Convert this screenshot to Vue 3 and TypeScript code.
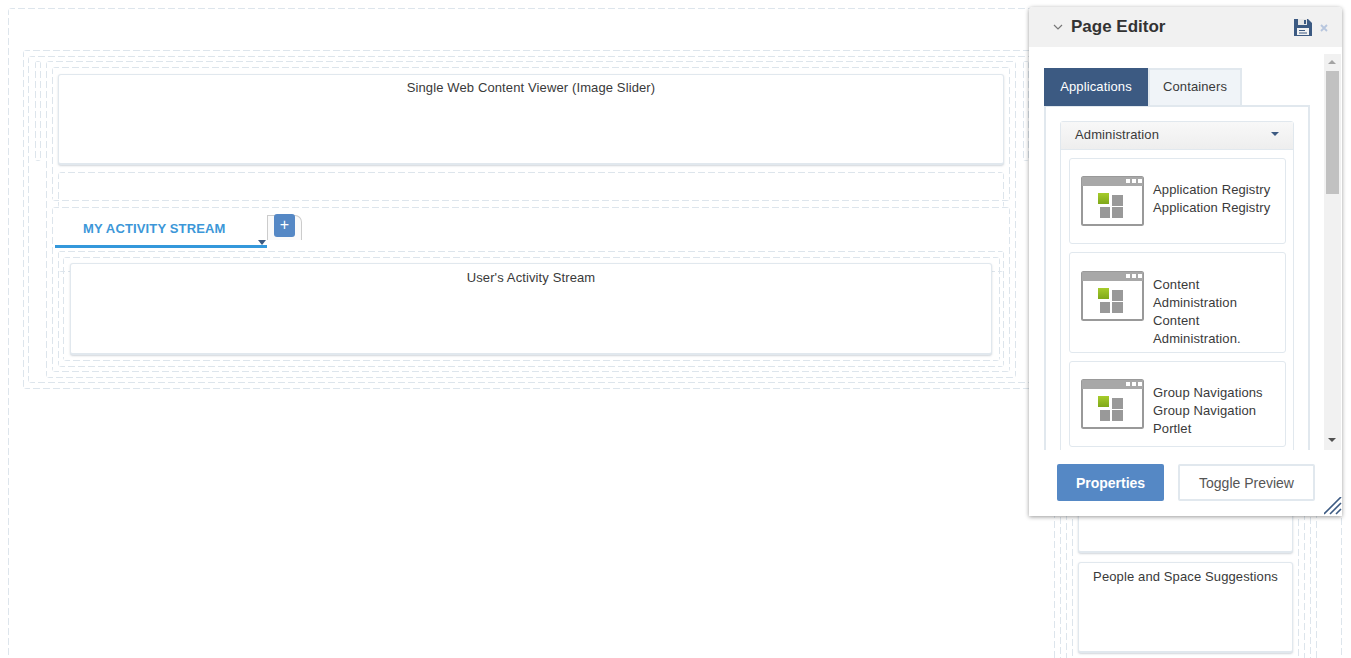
<script setup lang="ts">
interface App { id: string; lines: string }
const apps: App[] = [
  { id: 'a', lines: 'Application Registry Application Registry' },
  { id: 'b', lines: 'Content Administration Content Administration.' },
  { id: 'c', lines: 'Group Navigations Group Navigation Portlet' },
]
</script>

<template>
  <div class="page">
    <div class="outer dash">
      <div class="box-a dash">
        <div class="box-b dash">
          <div class="thin dash"></div>
          <div class="box-c dash">
            <div class="box-d dash">
              <div class="card card-wide">Single Web Content Viewer (Image Slider)</div>
              <div class="box-e dash"></div>
            </div>
            <div class="box-f dash">
              <div class="tabrow">
                <div class="stream-tab">MY ACTIVITY STREAM<span class="tab-caret"></span></div>
                <div class="add-tab"><span class="add-btn">+</span></div>
              </div>
              <div class="box-g dash">
                <div class="strip dash"></div>
                <div class="box-h dash">
                  <div class="card card-stream">User's Activity Stream</div>
                </div>
              </div>
            </div>
          </div>
          <div class="thin thin-2 dash"></div>
          <div class="r1 dash">
            <div class="r2 dash">
              <div class="r3 dash">
                <div class="r4 dash">
                  <div class="card card-side"></div>
                  <div class="card card-side">People and Space Suggestions</div>
                </div>
              </div>
            </div>
          </div>
        </div>
      </div>
    </div>

    <aside class="panel">
      <header class="panel-head">
        <svg class="chev" width="10" height="6" viewBox="0 0 10 6"><path d="M1 1l4 4 4-4" fill="none" stroke="#777" stroke-width="1.2" /></svg>
        <h1 class="panel-title">Page Editor</h1>
        <svg class="save" width="18" height="18" viewBox="0 0 18 18">
          <path d="M0 1h14l4 4v13H0z" fill="#3c5a82" />
          <rect x="4" y="1" width="9" height="6" fill="#e6e6e6" />
          <rect x="10" y="2" width="2" height="4" fill="#3c5a82" />
          <rect x="3" y="10" width="12" height="7" fill="#f2f2f2" />
          <rect x="5" y="12" width="6" height="1" fill="#3c5a82" />
          <rect x="5" y="14.5" width="8" height="1" fill="#3c5a82" />
        </svg>
        <svg class="close" width="8" height="8" viewBox="0 0 8 8"><path d="M1 1l6 6M7 1l-6 6" stroke="#b7c6de" stroke-width="1.8" /></svg>
      </header>

      <div class="panel-body">
        <div class="panel-scroll">
          <div class="tabs">
            <div class="tab tab-on">Applications</div>
            <div class="tab tab-off">Containers</div>
          </div>
          <div class="tab-content">
            <div class="accordion">
              <div class="acc-head">Administration<span class="acc-caret"></span></div>
              <div class="acc-body">
                <div v-for="app in apps" :key="app.id" class="app">
                  <svg class="app-icon" width="63" height="50" viewBox="0 0 63 50">
                    <defs>
                      <linearGradient :id="'g' + app.id" x1="0" y1="0" x2="0" y2="1">
                        <stop offset="0" stop-color="#a6cc2b" />
                        <stop offset="1" stop-color="#7fa81a" />
                      </linearGradient>
                    </defs>
                    <rect x="1" y="1" width="61" height="48" rx="1.5" fill="#fff" stroke="#999" stroke-width="2" />
                    <rect x="1" y="1" width="61" height="9" fill="#a8a8a8" />
                    <rect x="45" y="3" width="4" height="4" fill="#fff" />
                    <rect x="51" y="3" width="4" height="4" fill="#fff" />
                    <rect x="57" y="3" width="4" height="4" fill="#fff" />
                    <rect x="17" y="17" width="11" height="11" :fill="'url(#g' + app.id + ')'" />
                    <rect x="31" y="19" width="11" height="11" fill="#999" />
                    <rect x="19" y="31" width="10" height="11" fill="#999" />
                    <rect x="31" y="31" width="11" height="11" fill="#999" />
                  </svg>
                  <div class="app-text">{{ app.lines }}</div>
                </div>
              </div>
            </div>
          </div>
        </div>
        <div class="scrollbar">
          <span class="arrow arrow-up"></span>
          <span class="thumb"></span>
          <span class="arrow arrow-down"></span>
        </div>
      </div>

      <footer class="panel-foot">
        <button class="btn btn-primary" type="button">Properties</button>
        <button class="btn btn-ghost" type="button">Toggle Preview</button>
        <svg class="grip" width="18" height="18" viewBox="0 0 18 18">
          <path d="M0 17L17 0M6 17L17 6M12 17l5-5" stroke="#3c5a82" stroke-width="1.6" fill="none" />
        </svg>
      </footer>
    </aside>
  </div>
</template>

<style>
html, body { margin: 0; overflow: hidden; background: #fff; }
</style>

<style scoped>
* { box-sizing: border-box; }
.page {
  position: relative;
  height: 658px;
  overflow: hidden;
  padding: 8px 9px 0 8px;
  font-family: "Liberation Sans", Arial, sans-serif;
  font-size: 13px;
  letter-spacing: .12px;
  color: #3a3a3a;
  background: #fff;
}
.dash {
  border: 1px solid transparent;
  border-radius: 4px;
  background:
    repeating-linear-gradient(90deg, #dde5ec 0 7px, transparent 7px 10px) 0 0 / 100% 1px no-repeat border-box,
    repeating-linear-gradient(90deg, #dde5ec 0 7px, transparent 7px 10px) 0 100% / 100% 1px no-repeat border-box,
    repeating-linear-gradient(180deg, #dde5ec 0 7px, transparent 7px 10px) 0 0 / 1px 100% no-repeat border-box,
    repeating-linear-gradient(180deg, #dde5ec 0 7px, transparent 7px 10px) 100% 0 / 1px 100% no-repeat border-box;
}
.outer { height: 800px; padding: 41px 14px 0; }
.box-a { height: 339px; padding: 5px 4px 0; }
.box-b { height: 327px; padding: 4px 0 0 6px; display: flex; align-items: flex-start; }
.thin { width: 6px; height: 100px; flex: none; }
.box-c { width: 970px; height: 317px; margin-left: 5px; padding: 5px 0 0 5px; flex: none; }
.box-d { width: 958px; height: 134px; padding: 6px 0 0 5px; }
.card {
  background: #fff;
  border: 1px solid #e1e8ee;
  border-bottom-width: 2px;
  border-radius: 3px;
  box-shadow: 0 1px 2px rgba(120, 135, 150, .35);
  text-align: center;
  line-height: 18px;
  padding-top: 4px;
}
.card-wide { width: 946px; height: 91px; }
.box-e { width: 946px; height: 36px; margin-top: 7px; }
.box-f { width: 958px; height: 165px; margin-top: 6px; padding-left: 2px; background-color: #fff; }
.tabrow { display: flex; height: 40px; }
.stream-tab {
  position: relative;
  width: 212px;
  height: 40px;
  padding: 12px 0 0 28px;
  border-bottom: 3px solid #3498db;
  color: #3c97d8;
  font-weight: 700;
  line-height: 17px;
  letter-spacing: .15px;
}
.tab-caret {
  position: absolute;
  right: 1px;
  bottom: 0;
  border: 4px solid transparent;
  border-top: 5px solid #3c5a82;
  border-bottom: 0;
}
.add-tab {
  position: relative;
  width: 35px;
  height: 25px;
  margin-top: 7px;
  border: 1px solid #ccc;
  border-bottom: 0;
  border-radius: 0 7px 0 0;
  background: #fafafa;
}
.add-btn {
  position: absolute;
  left: 6px;
  top: -2px;
  display: block;
  width: 21px;
  height: 23px;
  border-radius: 3px;
  background: #5588c5;
  color: #fff;
  font-size: 16px;
  line-height: 22px;
  text-align: center;
}
.box-g { position: relative; width: 946px; height: 116px; margin: 3px 0 0 3px; padding: 5px 0 0 4px; }
.strip { position: absolute; left: -1px; top: -1px; width: 946px; height: 21px; }
.box-h { position: relative; width: 937px; height: 104px; padding: 5px 0 0 6px; }
.card-stream { width: 922px; height: 92px; padding-top: 5px; }
.thin-2 { margin-left: 7px; }
.r1 { width: 263px; height: 800px; margin-left: 25px; padding: 5px; flex: none; }
.r2, .r3 { height: 780px; padding: 5px; }
.r4 { height: 760px; padding: 382px 5px 0; }
.card-side { width: 215px; height: 91px; margin-bottom: 9px; padding-top: 5px; }

.panel {
  position: absolute;
  left: 1029px;
  top: 7px;
  width: 313px;
  height: 509px;
  display: flex;
  flex-direction: column;
  background: #fff;
  border-radius: 4px 4px 0 0;
  box-shadow: 0 1px 4px rgba(0, 0, 0, .4);
}
.panel-head {
  display: flex;
  align-items: center;
  height: 40px;
  flex: none;
  background: #f1f1f1;
  border-radius: 4px 4px 0 0;
}
.chev { margin-left: 24px; flex: none; }
.panel-title { margin: 0 0 0 8px; font-size: 17px; font-weight: 700; line-height: 20px; letter-spacing: 0; color: #333; flex: 1; }
.save { flex: none; }
.close { flex: none; margin: 2px 14px 0 8px; }
.panel-body { display: flex; height: 403px; flex: none; overflow: hidden; }
.panel-scroll { width: 295px; padding: 21px 0 0 15px; flex: none; }
.tabs { position: relative; display: flex; height: 39px; margin-bottom: -2px; z-index: 1; }
.tab { text-align: center; }
.tab-on { width: 104px; height: 38px; background: #3c5a82; color: #fff; line-height: 37px; }
.tab-off { width: 94px; height: 39px; background: #f0f4f8; border: 2px solid #e1e8ee; line-height: 33px; }
.tab-content { width: 266px; height: 500px; padding: 14px 0 0 14px; border: 2px solid #e1e8ee; border-bottom: 0; }
.accordion { width: 234px; border: 1px solid #e1e8ee; border-radius: 3px 3px 0 0; }
.acc-head {
  position: relative;
  height: 28px;
  padding-left: 14px;
  line-height: 25px;
  background: linear-gradient(#f8f8f8, #eeeeee);
  border-bottom: 1px solid #e1e8ee;
}
.acc-caret {
  position: absolute;
  left: 210px;
  top: 10px;
  border: 4px solid transparent;
  border-top: 4px solid #3c5a82;
  border-bottom: 0;
}
.acc-body { padding: 8px; display: flex; flex-direction: column; gap: 8px; }
.app {
  display: flex;
  width: 217px;
  min-height: 86px;
  padding: 17px 11px 6px;
  border: 1px solid #e1e8ee;
  border-radius: 3px;
  gap: 9px;
  align-items: flex-start;
}
.app:nth-child(2) { padding-top: 18px; padding-bottom: 5px; }
.app-icon { flex: none; }
.app-text { padding-top: 5px; line-height: 18px; color: #3a3a3a; margin-bottom: -1px; }
.scrollbar {
  position: relative;
  width: 17px;
  height: 396px;
  margin: 7px 0 0;
  background: #f1f1f1;
  flex: none;
}
.thumb { position: absolute; left: 2px; top: 17px; width: 13px; height: 123px; background: #c1c1c1; }
.arrow { position: absolute; left: 4px; border: 4px solid transparent; border-top: 0; border-bottom: 0; }
.arrow-up { top: 6px; border-bottom: 4px solid #a3a3a3; }
.arrow-down { top: 384px; border-top: 4px solid #505050; }
.panel-foot { position: relative; display: flex; gap: 14px; padding: 14px 0 0 28px; height: 66px; flex: none; background: #fff; }
.btn { height: 37px; font-family: inherit; font-size: 14px; border-radius: 2px; padding: 0; }
.btn-primary { width: 107px; background: #5588c5; border: 0; color: #fff; font-weight: 700; }
.btn-ghost { width: 137px; background: #fff; border: 2px solid #e1e8ee; color: #555; }
.grip { position: absolute; right: 0; bottom: 1px; }
</style>
